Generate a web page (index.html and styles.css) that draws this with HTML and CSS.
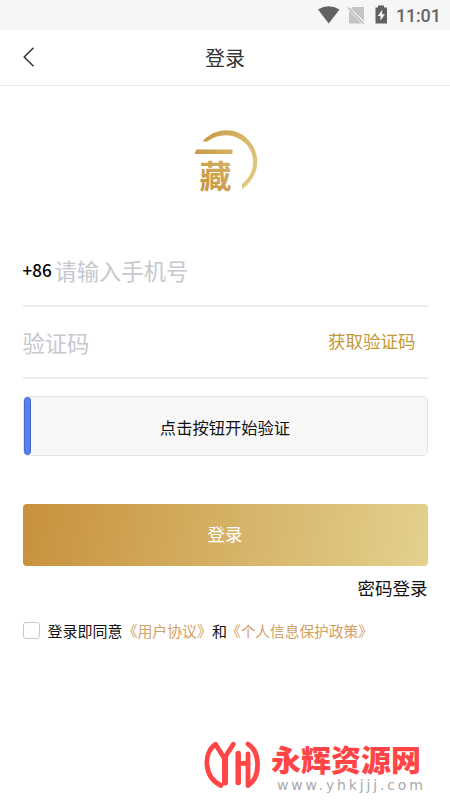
FILE: index.html
```html
<!DOCTYPE html>
<html lang="zh-CN">
<head>
<meta charset="utf-8">
<title>登录</title>
<link rel="stylesheet" href="styles.css">
</head>
<body>
<div class="status">
  <svg class="status-icons" width="72" height="20" viewBox="0 0 72 20">
    <path fill="#616161" d="M0 4.500Q10.700-2 21.500 4.500L10.700 18.500Z"/>
    <path fill="#c4c4c4" d="M35 2H46V16L33 3.500ZM31 5.500L43.500 18.500H31Z"/>
    <path stroke="#b5b5b5" stroke-width="1.200" d="M30 2.500L45.500 18.500"/>
    <path fill="#616161" d="M57.500 2.500H60V.5H66V2.500H69V18.500H57.500Z"/>
    <path fill="#f6f6f6" d="M64.200 4.800L59.800 11H62.500V15.500L67 9.300H64.200Z"/>
  </svg>
  <span class="clock">11:01</span>
</div>
<header class="header">
  <svg class="back" width="12" height="20" viewBox="0 0 12 20"><path d="M10.500 .7L1.200 10L10.500 19.300" fill="none" stroke="#333" stroke-width="1.500"/></svg>
  <h1 class="title">登录</h1>
</header>
<main class="main">
  <svg class="logo" width="66" height="70" viewBox="0 0 66 70">
    <defs>
      <linearGradient id="gold" gradientUnits="userSpaceOnUse" x1="0" y1="10" x2="64" y2="45"><stop offset="0" stop-color="#c4943f"/><stop offset="1" stop-color="#e3cb83"/></linearGradient>
      <linearGradient id="seal" gradientUnits="userSpaceOnUse" x1="8" y1="60" x2="38" y2="32"><stop offset="0" stop-color="#c4943f"/><stop offset="1" stop-color="#d6b466"/></linearGradient>
    </defs>
    <path fill="url(#gold)" d="M8.500 12.500C20 -1 41 -3 54 10.500C69 26 65 49 48 60V55C61 45 63 27 52 15C41.500 4 25 3.500 13.500 12.500Z"/>
    <path fill="url(#gold)" d="M2.500 20.500H38.500V25H.5Z"/>
    <text class="seal" x="5.500" y="58.500" fill="url(#seal)">藏</text>
  </svg>
  <div class="field"><span class="prefix">+86</span><span class="placeholder">请输入手机号</span></div>
  <div class="field"><span class="placeholder">验证码</span><span class="get-code">获取验证码</span></div>
  <div class="captcha"><span class="handle"></span><span class="captcha-text">点击按钮开始验证</span></div>
  <div class="submit">登录</div>
  <div class="password">密码登录</div>
  <div class="agree"><span class="box"></span><span>登录即同意</span><span class="link">《用户协议》</span><span>和</span><span class="link policy">《个人信息保护政策》</span></div>
</main>
<footer class="brand">
  <svg width="58" height="52" viewBox="0 0 58 52" fill="none" stroke="#ff4545" stroke-width="4.800" stroke-linecap="round" stroke-linejoin="round">
    <path d="M17 45.500C-.5 37 -1 13 11.500 4.300L20.300 18.300L29.300 4.300"/>
    <path d="M21 18.300V42.500" stroke-width="6"/>
    <path d="M34.200 13.500V42.500" stroke-width="5.500"/>
    <path d="M35 23.300H44"/>
    <path d="M44 14V45.500M44 4C56.500 12 57 37 44 45.500"/>
  </svg>
  <div class="brand-text"><div class="brand-name">永辉资源网</div><div class="brand-url">www.yhkjjj.com</div></div>
</footer>
</body>
</html>
```
FILE: styles.css
```css
* { box-sizing: border-box; }
body {
  margin: 0;
  width: 450px;
  height: 800px;
  overflow: hidden;
  display: flex;
  flex-direction: column;
  background: #fff;
  color: #111;
  font-family: "Noto Sans CJK SC", sans-serif;
}
.status {
  height: 30px;
  flex: none;
  background: #f6f6f6;
  display: flex;
  justify-content: flex-end;
  padding: 5px 10px 0 0;
}
.status-icons { margin-right: 6px; }
.clock {
  font: 500 18px/22px Roboto, sans-serif;
  color: #666;
  width: 44px;
  letter-spacing: -.2px;
  white-space: nowrap;
}
.header {
  height: 56px;
  flex: none;
  border-bottom: 1px solid #ebebeb;
  display: grid;
  grid-template-columns: 34px 1fr 34px;
  align-items: center;
}
.back { margin: -1px 0 0 23px; }
.title {
  margin: 0;
  text-align: center;
  font-size: 20px;
  font-weight: 400;
  line-height: 28px;
  color: #333;
}
.main {
  flex: 1;
  padding: 43px 22.500px 0;
  display: flex;
  flex-direction: column;
}
.logo { margin-left: 171.500px; flex: none; }
.seal { font: 700 32px "Noto Sans CJK SC", sans-serif; }
.field {
  height: 72px;
  flex: none;
  border-bottom: 2px solid #ebebeb;
  display: flex;
  align-items: center;
}
.logo + .field { margin-top: 36px; }
.prefix {
  font-size: 17px;
  font-weight: 500;
  line-height: 24px;
  color: #000;
  width: 32px;
}
.placeholder { font-size: 22.300px; line-height: 32px; color: #c5c8ce; }
.get-code { margin: 0 12px 3px auto; font-size: 17.500px; line-height: 24px; color: #c39835; }
.captcha {
  flex: none;
  height: 60px;
  margin-top: 17px;
  border: 1px solid #e4e4e4;
  border-radius: 5px;
  background: #f7f7f7;
  display: flex;
  align-items: center;
  font-size: 16.300px;
  line-height: 24px;
}
.handle {
  width: 7px;
  height: 58px;
  border: 1px solid #4667c0;
  border-radius: 4px;
  background: #5580f6;
}
.captcha-text { flex: 1; text-align: center; padding: 2px 7px 0 0; }
.submit {
  flex: none;
  height: 62px;
  margin-top: 48px;
  border-radius: 4px;
  background: linear-gradient(100deg, #c7913d, #e3d18d);
  color: #fff;
  display: flex;
  align-items: center;
  justify-content: center;
  font-size: 17.500px;
  line-height: 24px;
  padding-bottom: 2px;
}
.password { text-align: right; margin-top: 9px; font-size: 17.500px; line-height: 25px; }
.agree { display: flex; align-items: center; margin-top: 20px; font-size: 15px; line-height: 22px; white-space: nowrap; }
.policy { font-size: 14.800px; margin-left: -1px; }
.box { width: 17px; height: 17px; border: 1.500px solid #c8c9cc; border-radius: 3px; margin: -1px 8px 0 0; flex: none; }
.link { color: #d3a065; letter-spacing: -.1px; }
.brand {
  flex: none;
  height: 60px;
  padding-left: 204px;
  display: flex;
}
.brand-text { margin-left: 9px; }
.brand-name { font-size: 30px; font-weight: 900; line-height: 36px; color: #ff4545; white-space: nowrap; }
.brand-url { font: 14px/16px "DejaVu Sans", sans-serif; letter-spacing: 2.850px; color: #aaa; margin: 1px 0 0 6px; white-space: nowrap; }
```
